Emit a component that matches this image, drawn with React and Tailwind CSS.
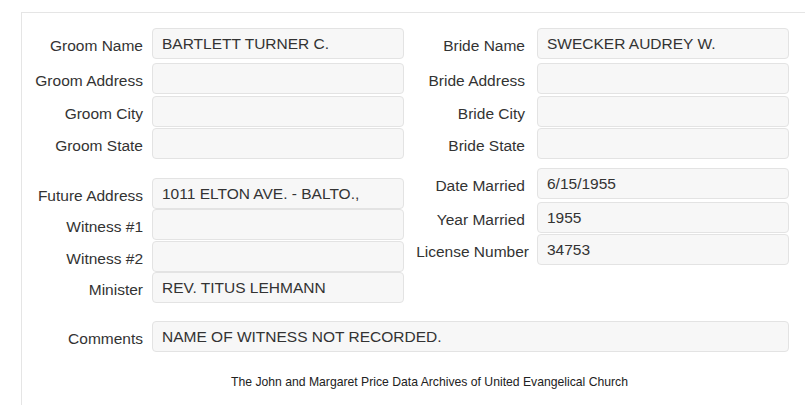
import React from "react";

function Field({ value, className = "" }) {
  return (
    <div
      className={`h-[31px] rounded-[4px] border border-[#e3e3e3] bg-[#f7f7f7] pl-[9px] flex items-center text-[#333] leading-none ${className}`}
    >
      {value}
    </div>
  );
}

function Row({ label, value, mt, labelClass = "", gapClass = "gap-[9px]", inputW = "w-[252px]" }) {
  return (
    <div className={`flex items-center ${gapClass} ${mt}`}>
      <div className={`w-[121px] shrink-0 text-right text-[#333] pt-[4px] whitespace-nowrap ${labelClass}`}>
        {label}
      </div>
      <Field value={value} className={`${inputW} shrink-0`} />
    </div>
  );
}

export default function App() {
  return (
    <div
      className="w-[805px] h-[405px] overflow-hidden bg-white text-[15.5px]"
      style={{ fontFamily: '"Liberation Sans", Arial, sans-serif' }}
    >
      <div className="ml-[21px] mt-[12px] w-[816px] h-[400px] border-l border-t border-[#e5e5e5]">
        <div className="flex">
          {/* left column */}
          <div className="flex flex-col w-[382px]">
            <Row label="Groom Name" value="BARTLETT TURNER C." mt="mt-[15px]" />
            <Row label="Groom Address" value="" mt="mt-[4px]" />
            <Row label="Groom City" value="" mt="mt-[2px]" />
            <Row label="Groom State" value="" mt="mt-[1px]" />
            <Row label="Future Address" value="1011 ELTON AVE. - BALTO.," mt="mt-[19px]" />
            <Row label="Witness #1" value="" mt="mt-0" />
            <Row label="Witness #2" value="" mt="mt-[1px]" />
            <Row label="Minister" value="REV. TITUS LEHMANN" mt="mt-0" />
          </div>
          {/* right column */}
          <div className="flex flex-col">
            <Row label="Bride Name" value="SWECKER AUDREY W." mt="mt-[15px]" gapClass="gap-[12px]" />
            <Row label="Bride Address" value="" mt="mt-[4px]" gapClass="gap-[12px]" />
            <Row label="Bride City" value="" mt="mt-[2px]" gapClass="gap-[12px]" />
            <Row label="Bride State" value="" mt="mt-[1px]" gapClass="gap-[12px]" />
            <Row label="Date Married" value="6/15/1955" mt="mt-[9px]" gapClass="gap-[12px]" />
            <Row label="Year Married" value="1955" mt="mt-[3px]" gapClass="gap-[12px]" />
            <Row
              label="License Number"
              value="34753"
              mt="mt-[1px]"
              gapClass="gap-[12px]"
              labelClass="translate-x-[4px]"
            />
          </div>
        </div>
        <Row label="Comments" value="NAME OF WITNESS NOT RECORDED." mt="mt-[18px]" inputW="w-[637px]" />
        <div className="w-[815px] text-center text-[12.2px] text-[#222] mt-[21px]">
          The John and Margaret Price Data Archives of United Evangelical Church
        </div>
      </div>
    </div>
  );
}
